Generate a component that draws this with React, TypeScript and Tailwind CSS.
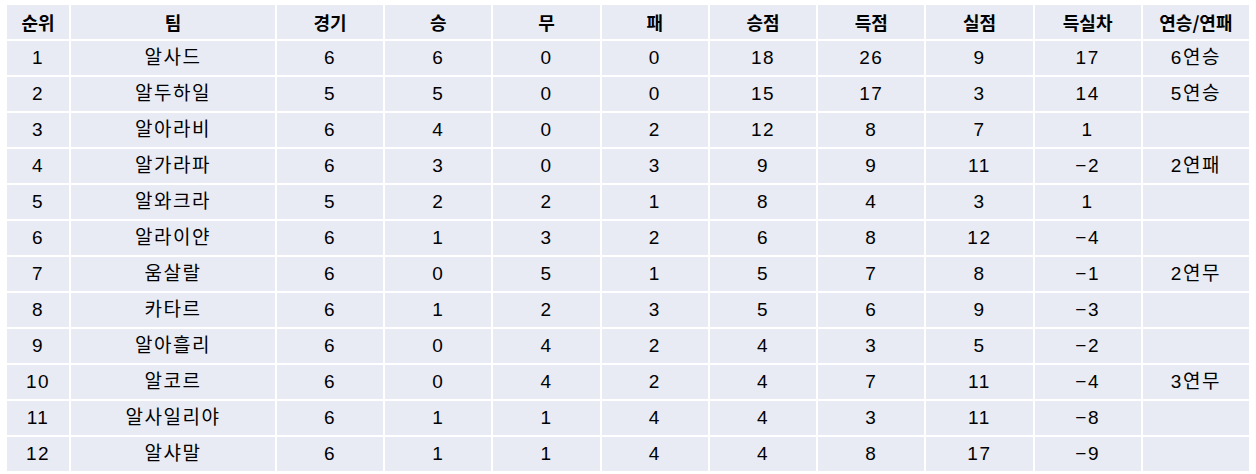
const headers = ["순위", "팀", "경기", "승", "무", "패", "승점", "득점", "실점", "득실차", "연승/연패"];

const rows: (string | number)[][] = [
  [1, "알사드", 6, 6, 0, 0, 18, 26, 9, 17, "6연승"],
  [2, "알두하일", 5, 5, 0, 0, 15, 17, 3, 14, "5연승"],
  [3, "알아라비", 6, 4, 0, 2, 12, 8, 7, 1, ""],
  [4, "알가라파", 6, 3, 0, 3, 9, 9, 11, -2, "2연패"],
  [5, "알와크라", 5, 2, 2, 1, 8, 4, 3, 1, ""],
  [6, "알라이얀", 6, 1, 3, 2, 6, 8, 12, -4, ""],
  [7, "움살랄", 6, 0, 5, 1, 5, 7, 8, -1, "2연무"],
  [8, "카타르", 6, 1, 2, 3, 5, 6, 9, -3, ""],
  [9, "알아흘리", 6, 0, 4, 2, 4, 3, 5, -2, ""],
  [10, "알코르", 6, 0, 4, 2, 4, 7, 11, -4, "3연무"],
  [11, "알사일리야", 6, 1, 1, 4, 4, 3, 11, -8, ""],
  [12, "알샤말", 6, 1, 1, 4, 4, 8, 17, -9, ""],
];

// negative numbers show a long dash like the source sheet
function fmt(v: string | number) {
  if (typeof v === "number" && v < 0) return "\u2212" + Math.abs(v);
  return String(v);
}

export default function App() {
  return (
    <div className="w-[1256px] h-[474px] bg-white pt-[5px] pl-[7px]">
      <div className="grid w-[1242px] grid-cols-[62px_204px_repeat(9,1fr)] gap-[2px] text-black">
        {/* Header */}
        {headers.map((h) => (
          <div
            key={h}
            className="h-[34px] flex items-center justify-center bg-[#e9ebf4] text-[18px] font-bold font-['Noto_Sans_CJK_KR',sans-serif]"
          >
            {h}
          </div>
        ))}

        {/* Body */}
        {rows.map((r) =>
          r.map((v, i) => (
            <div
              key={`${r[0]}-${i}`}
              className="h-[34px] flex items-center justify-center bg-[#e9ebf4] text-[19px] tracking-[1.5px] font-['Liberation_Sans','Noto_Sans_CJK_KR',sans-serif]"
            >
              {fmt(v)}
            </div>
          ))
        )}
      </div>
    </div>
  );
}
